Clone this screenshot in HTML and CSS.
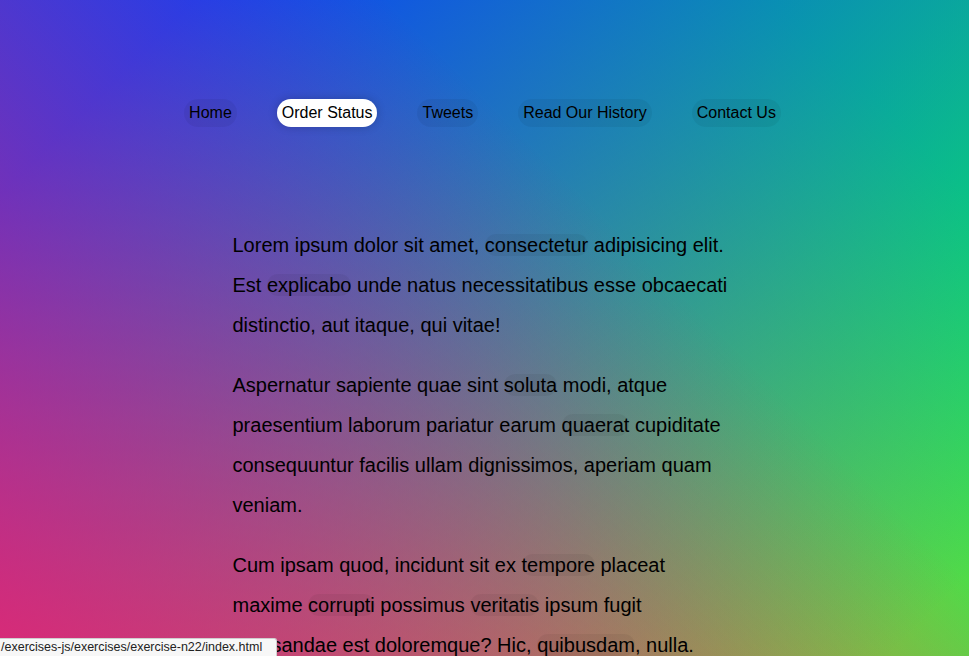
FILE: index.html
```html
<!DOCTYPE html>
<html lang="en">
<head>
<meta charset="UTF-8">
<title>Follow Along Nav</title>
<link rel="stylesheet" href="styles.css">
</head>
<body>
  <nav>
    <ul class="menu">
      <li><a href="#">Home</a></li>
      <li><a href="#" class="active">Order Status</a></li>
      <li><a href="#">Tweets</a></li>
      <li><a href="#">Read Our History</a></li>
      <li><a href="#">Contact Us</a></li>
    </ul>
  </nav>
  <div class="wrapper">
    <p>Lorem ipsum dolor sit amet, <a href="#">consectetur</a> adipisicing elit. Est <a href="#">explicabo</a> unde natus necessitatibus esse obcaecati distinctio, aut itaque, qui vitae!</p>
    <p>Aspernatur sapiente quae sint <a href="#">soluta</a> modi, atque praesentium laborum pariatur earum <a href="#">quaerat</a> cupiditate consequuntur facilis ullam dignissimos, aperiam quam veniam.</p>
    <p>Cum ipsam quod, incidunt sit ex <a href="#">tempore</a> placeat maxime <a href="#">corrupti</a> possimus <a href="#">veritatis</a> ipsum fugit recusandae est doloremque? Hic, <a href="#">quibusdam</a>, nulla.</p>
    <p>Esse quibusdam, ad, ducimus cupiditate <a href="#">nulla</a>, quae magni odit <a href="#">totam</a> ut consequatur eveniet sunt quam provident sapiente dicta neque quod.</p>
    <p>Aliquam <a href="#">dicta</a> sequi culpa fugiat <a href="#">consequuntur</a> pariatur optio ad minima, maxime <a href="#">odio</a>, distinctio magni impedit tempore enim repellendus <a href="#">repudiandae</a> quas!</p>
  </div>
  <div class="statusbar">/exercises-js/exercises/exercise-n22/index.html</div>
</body>
</html>
```
FILE: styles.css
```css
html {
  box-sizing: border-box;
}
*, *::before, *::after {
  box-sizing: inherit;
}
body {
  min-height: 100vh;
  margin: 0;
  padding-right: 4px;
  font-family: "Liberation Sans", Arial, sans-serif;
  background:
    linear-gradient(45deg, hsla(340, 100%, 55%, 1) 0%, hsla(340, 100%, 55%, 0) 70%),
    linear-gradient(135deg, hsla(225, 95%, 50%, 1) 10%, hsla(225, 95%, 50%, 0) 80%),
    linear-gradient(225deg, hsla(140, 90%, 50%, 1) 10%, hsla(140, 90%, 50%, 0) 80%),
    linear-gradient(315deg, hsla(35, 95%, 55%, 1) 100%, hsla(35, 95%, 55%, 0) 70%);
}
.wrapper {
  margin: 0 auto;
  max-width: 500px;
  font-size: 20px;
  line-height: 2;
}
a {
  text-decoration: none;
  color: black;
  background: rgba(0, 0, 0, 0.05);
  border-radius: 20px;
}
.menu {
  padding: 0;
  display: flex;
  list-style: none;
  justify-content: center;
  margin: 99px 0 98px;
  font-size: 16px;
}
.menu a {
  display: inline-block;
  padding: 5px;
  margin: 0 20px;
}
.menu a.active {
  background: white;
  box-shadow: 0 0 10px rgba(0, 0, 0, 0.2);
}
.statusbar {
  position: fixed;
  left: 0;
  bottom: 0;
  width: 277px;
  height: 18px;
  padding: 0 2px 0 1px;
  background: #f7f7f7;
  border: 1px solid #cfcfcf;
  border-left: none;
  border-bottom: none;
  border-top-right-radius: 3px;
  font-size: 12.5px;
  line-height: 17px;
  color: #222;
  white-space: nowrap;
  overflow: hidden;
}
```
